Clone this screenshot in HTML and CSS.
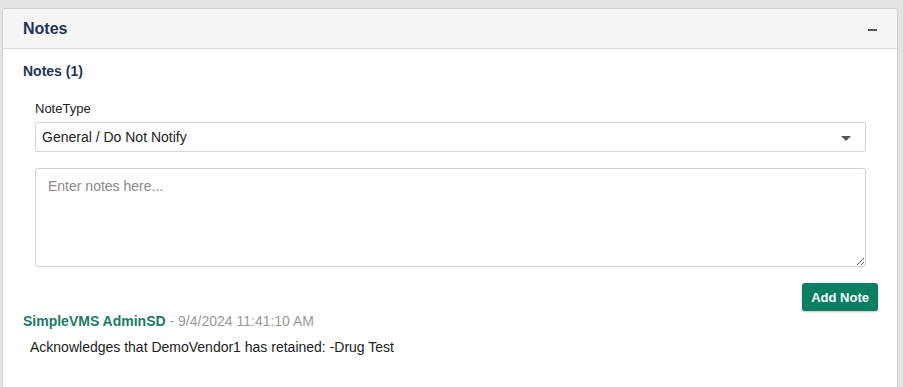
FILE: index.html
```html
<!DOCTYPE html>
<html lang="en">
<head>
    <meta charset="UTF-8">
    <meta name="viewport" content="width=device-width, initial-scale=1.0">
    <title>Notes</title>
    <link rel="stylesheet" href="styles.css">
</head>
<body>
    <div class="panel">
        <div class="panel-header">
            <h2>Notes</h2>
            <span class="collapse-btn"></span>
        </div>

        <div class="panel-body">
            <h3 class="notes-count">Notes (1)</h3>

            <div class="note-form">
                <label for="noteType">NoteType</label>
                <div class="select-wrap">
                    <select id="noteType">
                        <option>General / Do Not Notify</option>
                    </select>
                    <span class="caret"></span>
                </div>

                <textarea rows="5" placeholder="Enter notes here..."></textarea>
            </div>

            <div class="actions">
                <button class="add-btn">Add Note</button>
            </div>

            <div class="note">
                <div class="note-meta">
                    <span class="note-author">SimpleVMS AdminSD</span> - 9/4/2024 11:41:10 AM
                </div>
                <p class="note-text">Acknowledges that DemoVendor1 has retained: -Drug Test</p>
            </div>
        </div>
    </div>
</body>
</html>
```

FILE: styles.css
```css
* {
    margin: 0;
    padding: 0;
    box-sizing: border-box;
}

body {
    font-family: 'Liberation Sans', Arial, sans-serif;
    background: #e4e4e4;
    height: 387px;
    overflow: hidden;
    padding: 8px 5px 0 2px;
}

.panel {
    background: white;
    border: 1px solid #cfcfcf;
    border-bottom: none;
    border-radius: 4px 4px 0 0;
    height: 100%;
}

.panel-header {
    background: #f5f5f5;
    border-bottom: 1px solid #dcdcdc;
    border-radius: 4px 4px 0 0;
    height: 40px;
    padding: 0 20px;
    display: flex;
    align-items: center;
    justify-content: space-between;
}

.panel-header h2 {
    font-size: 16px;
    font-weight: 700;
    color: #1e3557;
}

.collapse-btn {
    width: 9px;
    height: 2px;
    background: #555;
    margin-top: 3px;
}

.panel-body {
    padding: 14px 19px 0 20px;
}

.notes-count {
    font-size: 14px;
    font-weight: 700;
    color: #1e3557;
    margin-bottom: 22px;
}

.note-form {
    padding: 0 12px;
}

label {
    display: block;
    font-size: 13px;
    color: #222;
    margin-bottom: 6px;
}

.select-wrap {
    position: relative;
    margin-bottom: 16px;
}

select {
    width: 100%;
    height: 30px;
    border: 1px solid #d5d5d5;
    border-radius: 2px;
    background: white;
    font-family: inherit;
    font-size: 14px;
    color: #222;
    padding: 0 6px;
    appearance: none;
}

.caret {
    position: absolute;
    right: 15px;
    top: 14px;
    border-left: 5px solid transparent;
    border-right: 5px solid transparent;
    border-top: 5px solid #555;
}

textarea {
    display: block;
    width: 100%;
    height: 99px;
    border: 1px solid #d0d0d0;
    border-radius: 3px;
    padding: 9px 12px;
    font-family: inherit;
    font-size: 14px;
    resize: vertical;
}

textarea::placeholder {
    color: #8a8a8a;
}

.actions {
    display: flex;
    justify-content: flex-end;
    margin-top: 16px;
}

.add-btn {
    background: #087f62;
    color: white;
    border: none;
    border-radius: 3px;
    height: 28px;
    padding: 0 9px;
    font-family: inherit;
    font-size: 13px;
    font-weight: 700;
    box-shadow: 0 1px 2px rgba(0,0,0,0.25);
}

.note {
    margin-top: 2px;
}

.note-meta {
    font-size: 14px;
    color: #999;
}

.note-author {
    color: #197c64;
    font-weight: 700;
}

.note-text {
    font-size: 14px;
    color: #222;
    padding-left: 7px;
    margin-top: 10px;
}
```
